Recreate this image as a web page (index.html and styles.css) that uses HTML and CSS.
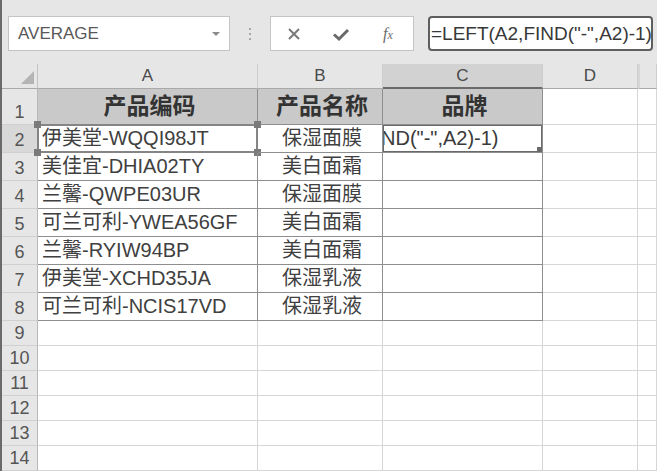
FILE: index.html
```html
<!DOCTYPE html>
<html>
  <head>
    <meta charset="utf-8" />
    <link rel="stylesheet" href="styles.css">
  </head>
  <body>
    <div class="app">
      <div class="formula-bar">
        <div class="name-box">
          <span class="name-text">AVERAGE</span>
          <span class="drop"></span>
        </div>
        <div class="grip"><i></i><i></i><i></i></div>
        <div class="fx-buttons">
          <svg class="ico" width="16" height="16" viewBox="0 0 16 16">
            <path d="M3 3 L13 13 M13 3 L3 13" stroke="#7a7a7a" stroke-width="2" fill="none" />
          </svg>
          <svg class="ico" width="18" height="16" viewBox="0 0 18 16">
            <path d="M2 8.5 L7 13 L16 4" stroke="#6a6a6a" stroke-width="3" fill="none" />
          </svg>
          <span class="fx"><span class="fx-f">f</span><span class="fx-x">x</span></span>
        </div>
        <div class="formula-input">=LEFT(A2,FIND("-",A2)-1)</div>
      </div>

      <div class="sheet">
        <!-- column headers -->
        <div class="corner"><span class="tri"></span></div>
        <div class="col-head">A</div>
        <div class="col-head">B</div>
        <div class="col-head sel">C</div>
        <div class="col-head">D</div>
        <div class="col-head last"></div>

        <!-- row 1 -->
        <div class="row-head">1</div>
        <div class="cell tb title">产品编码</div>
        <div class="cell tb title">产品名称</div>
        <div class="cell tb title">品牌</div>
        <div class="cell"></div>
        <div class="cell"></div>

        <!-- row 2 -->
        <div class="row-head sel">2</div>
        <div class="cell tb ref">伊美堂-WQQI98JT
          <span class="ref-box"></span>
          <span class="h tl"></span><span class="h tr"></span><span class="h bl"></span><span class="h br"></span>
        </div>
        <div class="cell tb mid">保湿面膜</div>
        <div class="cell tb active"><span class="edit">ND("-",A2)-1)</span><span class="active-box"></span><span class="fill"></span></div>
        <div class="cell"></div>
        <div class="cell"></div>

        <div class="row-head">3</div>
        <div class="cell tb">美佳宜-DHIA02TY</div>
        <div class="cell tb mid">美白面霜</div>
        <div class="cell tb"></div>
        <div class="cell"></div>
        <div class="cell"></div>

        <div class="row-head">4</div>
        <div class="cell tb">兰馨-QWPE03UR</div>
        <div class="cell tb mid">保湿面膜</div>
        <div class="cell tb"></div>
        <div class="cell"></div>
        <div class="cell"></div>

        <div class="row-head">5</div>
        <div class="cell tb">可兰可利-YWEA56GF</div>
        <div class="cell tb mid">美白面霜</div>
        <div class="cell tb"></div>
        <div class="cell"></div>
        <div class="cell"></div>

        <div class="row-head">6</div>
        <div class="cell tb">兰馨-RYIW94BP</div>
        <div class="cell tb mid">美白面霜</div>
        <div class="cell tb"></div>
        <div class="cell"></div>
        <div class="cell"></div>

        <div class="row-head">7</div>
        <div class="cell tb">伊美堂-XCHD35JA</div>
        <div class="cell tb mid">保湿乳液</div>
        <div class="cell tb"></div>
        <div class="cell"></div>
        <div class="cell"></div>

        <div class="row-head">8</div>
        <div class="cell tb">可兰可利-NCIS17VD</div>
        <div class="cell tb mid">保湿乳液</div>
        <div class="cell tb"></div>
        <div class="cell"></div>
        <div class="cell"></div>

        <div class="row-head">9</div>
        <div class="cell"></div><div class="cell"></div><div class="cell"></div><div class="cell"></div><div class="cell"></div>
        <div class="row-head">10</div>
        <div class="cell"></div><div class="cell"></div><div class="cell"></div><div class="cell"></div><div class="cell"></div>
        <div class="row-head">11</div>
        <div class="cell"></div><div class="cell"></div><div class="cell"></div><div class="cell"></div><div class="cell"></div>
        <div class="row-head">12</div>
        <div class="cell"></div><div class="cell"></div><div class="cell"></div><div class="cell"></div><div class="cell"></div>
        <div class="row-head">13</div>
        <div class="cell"></div><div class="cell"></div><div class="cell"></div><div class="cell"></div><div class="cell"></div>
        <div class="row-head">14</div>
        <div class="cell"></div><div class="cell"></div><div class="cell"></div><div class="cell"></div><div class="cell"></div>
      </div>
    </div>
  </body>
</html>
```

FILE: styles.css
```css
* {
  margin: 0;
  padding: 0;
  box-sizing: border-box;
}

html,
body {
  height: 100%;
  overflow: hidden;
}

body {
  font-family: 'Liberation Sans', 'Noto Sans CJK SC', sans-serif;
  color: #404040;
  background-color: #e6e6e6;
}

.app {
  height: 100%;
  border-left: 2px solid #6a6a6a;
}

/* 수식 입력줄 */
.formula-bar {
  height: 64px;
  display: flex;
  align-items: flex-start;
  padding: 16px 0 0 6px;
}

.name-box {
  width: 222px;
  height: 35px;
  background-color: #fff;
  border: 1px solid #c4c4c4;
  display: flex;
  align-items: center;
  justify-content: space-between;
  padding: 0 9px 0 9px;
}

.name-text {
  font-size: 17px;
  color: #585858;
}

.drop {
  width: 0;
  height: 0;
  border-left: 4px solid transparent;
  border-right: 4px solid transparent;
  border-top: 4px solid #8a8a8a;
}

.grip {
  width: 40px;
  height: 35px;
  display: flex;
  flex-direction: column;
  align-items: center;
  justify-content: center;
  gap: 3px;
}

.grip > i {
  display: block;
  width: 2px;
  height: 2px;
  background-color: #a8a8a8;
}

.fx-buttons {
  width: 144px;
  height: 35px;
  background-color: #fff;
  border: 1px solid #c4c4c4;
  display: flex;
  align-items: center;
  padding-left: 15px;
  gap: 30px;
}

.fx {
  font-family: 'Liberation Serif', serif;
  font-style: italic;
  color: #6a6a6a;
  font-size: 16px;
  line-height: 1;
  margin-left: 3px;
}

.fx-x {
  font-size: 12px;
}

.formula-input {
  margin-left: 14px;
  width: 225px;
  height: 35px;
  background-color: #fff;
  border: 2px solid #5e5e5e;
  border-radius: 4px;
  font-size: 19px;
  line-height: 31px;
  padding-left: 1px;
  color: #383838;
  white-space: nowrap;
  overflow: hidden;
}

/* 시트 */
.sheet {
  display: grid;
  grid-template-columns: 36px 220px 125px 160px 95px 1fr;
  grid-template-rows: 25px 36px 28px 28px 28px 28px 28px 28px 28px 25px 25px 25px 25px 25px 25px;
  background-color: #fff;
}

.corner {
  background-color: #e6e6e6;
  border-right: 1px solid #c2c2c2;
  border-bottom: 1px solid #a9a9a9;
  display: flex;
  align-items: flex-end;
  justify-content: flex-end;
  padding: 0 3px 4px 0;
}

.tri {
  width: 13px;
  height: 13px;
  background-color: #b4b4b4;
  clip-path: polygon(100% 0, 100% 100%, 0 100%);
}

.col-head {
  background-color: #e6e6e6;
  border-right: 1px solid #cdcdcd;
  border-bottom: 1px solid #a9a9a9;
  text-align: center;
  font-size: 17px;
  line-height: 24px;
  color: #4a4a4a;
}

.col-head.sel {
  background-color: #d2d2d2;
  border-bottom: 2px solid #6a6a6a;
}

.col-head.last {
  border-left: 2px solid #d6d6d6;
}

.row-head {
  background-color: #e6e6e6;
  border-right: 1px solid #b8b8b8;
  border-bottom: 1px solid #d0d0d0;
  text-align: center;
  font-size: 18px;
  color: #555;
  display: flex;
  align-items: flex-end;
  justify-content: center;
  padding-bottom: 1px;
  line-height: 22px;
}

.row-head.sel {
  background-color: #d8d8d8;
}

.cell {
  border-right: 1px solid #d6d6d6;
  border-bottom: 1px solid #d6d6d6;
  font-size: 20px;
  line-height: 27px;
  padding-left: 4px;
  white-space: nowrap;
  position: relative;
}

.cell.tb {
  border-right-color: #8e8e8e;
  border-bottom-color: #8e8e8e;
}

.cell.title {
  background-color: #c9c9c9;
  font-weight: bold;
  font-size: 23px;
  line-height: 34px;
  text-align: center;
  color: #333;
}

.cell.mid {
  text-align: center;
}

.cell.active {
  overflow: hidden;
}

.edit {
  margin-left: -6px;
  color: #3a3a3a;
}

.active-box {
  position: absolute;
  top: -1px;
  left: -1px;
  right: -1px;
  bottom: -1px;
  border: 2px solid #6a6a6a;
}

.fill {
  position: absolute;
  right: -1px;
  bottom: -1px;
  width: 6px;
  height: 6px;
  background-color: #6a6a6a;
}

/* 참조 셀 표시 */
.ref-box {
  position: absolute;
  top: -1px;
  left: -1px;
  right: -1px;
  bottom: -1px;
  border: 2px solid #858585;
}

.h {
  position: absolute;
  width: 7px;
  height: 7px;
  background-color: #7a7a7a;
}

.h.tl { top: -4px; left: -4px; }
.h.tr { top: -4px; right: -4px; }
.h.bl { bottom: -4px; left: -4px; }
.h.br { bottom: -4px; right: -4px; }
```
